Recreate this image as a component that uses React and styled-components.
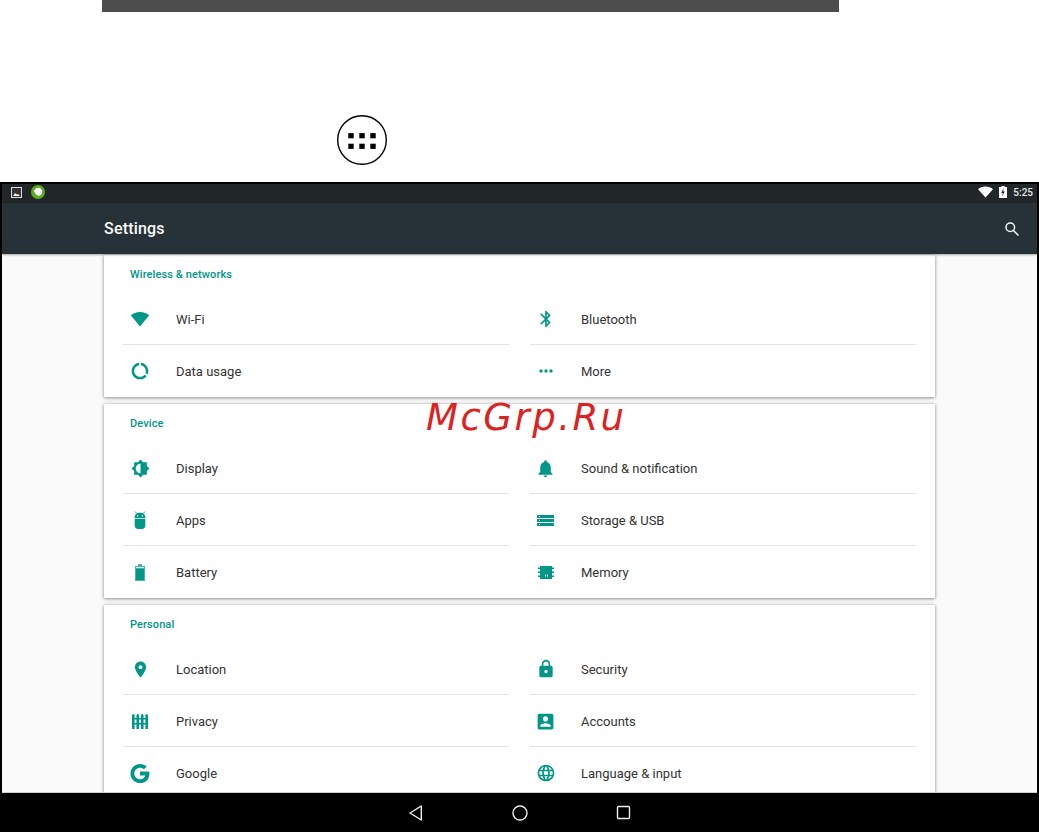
import React from 'react';
import styled, { createGlobalStyle } from 'styled-components';

const Global = createGlobalStyle`
  html, body { margin: 0; padding: 0; background: #fff; }
  body { font-family: Roboto, "Liberation Sans", sans-serif; width: 1039px; height: 832px; overflow: hidden; }
`;

const Page = styled.div`
  width: 1039px; height: 832px; display: flex; flex-direction: column; overflow: hidden; background: #fff;
`;
const Manual = styled.div`
  height: 182px; flex: none; padding-left: 102px; display: flex; flex-direction: column;
`;
const TopBar = styled.div`
  width: 737px; height: 12px; background: #4d4d4d; flex: none;
`;
const LauncherWrap = styled.div`
  margin: 102px 0 0 234px; width: 52px; height: 52px;
`;
const Screen = styled.div`
  flex: 1; display: flex; flex-direction: column; position: relative; min-height: 0;
  border: solid #000; border-width: 2px 2px 0; background: #fafafa;
`;
const StatusBar = styled.div`
  height: 19px; flex: none; box-sizing: border-box; background: #212729; display: flex; align-items: center;
  padding: 0 4px 3px 9px; justify-content: space-between;
`;
const StatusGroup = styled.div`
  display: flex; align-items: center; gap: ${p => p.$gap}px;
`;
const Clock = styled.span`
  font-size: 10px; font-weight: 500; color: #e8e8e8; width: 20px; text-align: right;
`;
const Toolbar = styled.div`
  height: 51px; flex: none; background: #263238;
  display: flex; align-items: center; justify-content: space-between; padding: 0 17px 0 102px;
  position: relative; z-index: 2; box-shadow: 0 1px 2px rgba(0,0,0,.35);
`;
const Title = styled.h1`
  margin: 0; font-size: 16px; font-weight: 500; color: #fafafa; letter-spacing: .2px;
`;
const Content = styled.div`
  flex: 1; min-height: 0; overflow: hidden; padding: 1px 102px 0;
  display: flex; flex-direction: column; gap: 7px;
`;
const Card = styled.section`
  flex: none; background: #fff; padding: 0 19px;
  box-shadow: 0 1px 3px rgba(0,0,0,.35), 0 0 4px rgba(0,0,0,.18);
`;
const Heading = styled.h2`
  margin: 0; height: 38px; padding-left: 7px; box-sizing: border-box; display: flex; align-items: center;
  font-size: 11px; font-weight: 500; color: #009688; letter-spacing: .1px;
`;
const Grid = styled.div`
  display: grid; grid-template-columns: 386px 386px; column-gap: 21px;
`;
const Row = styled.div`
  height: 52px; box-sizing: border-box; display: flex; align-items: center;
  padding-top: ${p => p.$last ? 0 : 1}px;
  border-bottom: ${p => p.$last ? 'none' : '1px solid #e3e3e3'};
`;
const IconCell = styled.span`
  width: ${p => p.$right ? 51 : 53}px; flex: none; display: flex; justify-content: center;
  padding-right: ${p => p.$right ? 20 : 19}px; box-sizing: border-box; color: #009688;
`;
const Label = styled.span`
  font-size: 13px; color: #333; white-space: nowrap;
`;
const NavBar = styled.div`
  height: 40px; flex: none; background: #000; border-top: 1px solid #d0d0d0; box-sizing: border-box;
  display: flex; align-items: center; padding-left: 405px; gap: 86px;
`;
const Watermark = styled.div`
  position: absolute; left: 424px; top: 215px; font-family: "DejaVu Sans", sans-serif; font-style: italic;
  font-size: 37px; color: #dd2222; letter-spacing: 2.500px; line-height: 1;
`;

const Svg = ({ size = 20, children, vb = '0 0 24 24' }) => (
  <svg width={size} height={size} viewBox={vb} fill="currentColor">{children}</svg>
);

const icons = {
  wifi: <Svg size={20}><path d="M12 21 1 7.5C3.5 5 7.5 3.5 12 3.5S20.500 5 23 7.500z" /></Svg>,
  bt: <Svg size={20}><path d="M17.710 7.710 12 2h-1v7.590L6.410 5 5 6.410 10.590 12 5 17.590 6.410 19 11 14.410V22h1l5.710-5.710L13.410 12l4.300-4.290zM13 5.830l1.880 1.880L13 9.590V5.830zm1.880 10.460L13 18.170v-3.760l1.880 1.880z" /></Svg>,
  data: <Svg size={20}><path d="M13 2.050v3.030c3.390.49 6 3.390 6 6.920 0 .9-.18 1.750-.48 2.540l2.600 1.530c.56-1.240.88-2.620.88-4.070 0-5.180-3.950-9.450-9-9.950zM12 19c-3.870 0-7-3.130-7-7 0-3.530 2.610-6.430 6-6.920V2.050c-5.060.5-9 4.760-9 9.950 0 5.520 4.470 10 9.990 10 3.310 0 6.240-1.610 8.060-4.090l-2.600-1.530C16.170 17.980 14.210 19 12 19z" /></Svg>,
  more: <Svg size={20}><circle cx="6" cy="12" r="2" /><circle cx="12" cy="12" r="2" /><circle cx="18" cy="12" r="2" /></Svg>,
  display: <Svg size={19}><g transform="matrix(-1 0 0 1 24 0)"><path d="M20 15.310 23.310 12 20 8.690V4h-4.690L12 .69 8.690 4H4v4.690L.69 12 4 15.310V20h4.690L12 23.310 15.310 20H20v-4.690zM12 18V6c3.310 0 6 2.690 6 6s-2.690 6-6 6z" /></g></Svg>,
  bell: <Svg size={21}><path d="M12 22c1.100 0 2-.9 2-2h-4c0 1.100.9 2 2 2zm6-6v-5c0-3.070-1.630-5.640-4.500-6.320V4c0-.83-.67-1.500-1.500-1.500s-1.500.67-1.500 1.500v.68C7.640 5.360 6 7.920 6 11v5l-2 2v1h16v-1l-2-2z" /></Svg>,
  apps: (
    <svg width="12" height="18" viewBox="0 0 12 18" fill="currentColor">
      <path d="M1 .5 3 2.800M11 .5 9 2.800" stroke="currentColor" strokeWidth=".8" />
      <path fillRule="evenodd" d="M.7 7.200V6C.7 3.500 3 1.700 6 1.700S11.300 3.500 11.300 6v1.200zM3 4.200v1.300h1.300V4.200zm4.700 0v1.300H9V4.200z" />
      <path d="M.7 8h10.600v6.300A3.700 3.700 0 0 1 7.600 18H4.400A3.700 3.700 0 0 1 .7 14.300z" />
    </svg>
  ),
  storage: (
    <svg width="17" height="11" viewBox="0 0 17 11" fill="currentColor">
      <path fillRule="evenodd" d="M0 0h17v3H0zM2 1v1h1V1zM0 4h17v3H0zM2 5v1h1V5zM0 8h17v3H0zM2 9v1h1V9z" />
    </svg>
  ),
  battery: (
    <svg width="10" height="17" viewBox="0 0 10 17">
      <path d="M3 0h4v2h3v15H0V2h3z" fill="#4db6ac" />
      <rect x="1" y="3" width="8" height="1.500" fill="#cfeae7" />
      <rect x="1" y="4.500" width="8" height="11.500" fill="#009688" />
    </svg>
  ),
  memory: (
    <svg width="16" height="13" viewBox="0 0 16 13" fill="currentColor">
      <path fillRule="evenodd" d="M2 0h12v13H2zM7 8.500v2h1v-2zm2 0v2h1v-2z" />
      <path d="M0 1.500h2V3H0zM0 5.500h2V7H0zM0 9.500h2V11H0zM14 1.500h2V3h-2zM14 5.500h2V7h-2zM14 9.500h2V11h-2z" />
    </svg>
  ),
  location: <Svg size={19}><path d="M12 2C8.130 2 5 5.130 5 9c0 5.250 7 13 7 13s7-7.750 7-13c0-3.870-3.130-7-7-7zm0 9.500c-1.380 0-2.500-1.120-2.500-2.500s1.120-2.500 2.500-2.500 2.500 1.120 2.500 2.500-1.120 2.500-2.500 2.500z" /></Svg>,
  lock: <Svg size={20}><path d="M18 8h-1V6c0-2.760-2.240-5-5-5S7 3.240 7 6v2H6c-1.100 0-2 .9-2 2v10c0 1.100.9 2 2 2h12c1.100 0 2-.9 2-2V10c0-1.100-.9-2-2-2zm-6 9c-1.100 0-2-.9-2-2s.9-2 2-2 2 .9 2 2-.9 2-2 2zm3.100-9H8.900V6c0-1.710 1.390-3.100 3.100-3.100 1.710 0 3.100 1.390 3.100 3.100v2z" /></Svg>,
  privacy: (
    <svg width="16" height="16" viewBox="0 0 16 16" fill="currentColor">
      <path d="M0 2 1.300.7 2.600 2v14H0zM4.450 2 5.750.7 7.050 2v14h-2.600zM8.950 2l1.300-1.300L11.550 2v14h-2.600zM13.400 2l1.300-1.300L16 2v14h-2.600z" />
      <path d="M0 5h16v1.500H0zM0 10h16v1.500H0z" />
    </svg>
  ),
  account: <Svg size={21}><path d="M3 5v14c0 1.100.89 2 2 2h14c1.100 0 2-.9 2-2V5c0-1.100-.9-2-2-2H5c-1.110 0-2 .9-2 2zm12 4c0 1.660-1.340 3-3 3s-3-1.340-3-3 1.340-3 3-3 3 1.340 3 3zm-9 8c0-2 4-3.100 6-3.100s6 1.100 6 3.100v1H6v-1z" /></Svg>,
  google: <Svg size={23}><path d="M11.500 10v4h5.500c-.7 2.400-2.800 4-5.500 4-3.400 0-6-2.700-6-6s2.600-6 6-6c1.600 0 3 .6 4.100 1.600l2.900-2.900C16.500 3 14.200 2 11.500 2 6 2 1.500 6.500 1.500 12s4.500 10 10 10c5.800 0 9.800-4 9.800-9.800 0-.8-.1-1.500-.2-2.200h-9.600z" /></Svg>,
  globe: <Svg size={20}><path d="M11.990 2C6.470 2 2 6.480 2 12s4.470 10 9.990 10C17.520 22 22 17.520 22 12S17.520 2 11.990 2zm6.930 6h-2.950c-.32-1.250-.78-2.450-1.380-3.560 1.840.63 3.370 1.910 4.330 3.560zM12 4.040c.83 1.200 1.480 2.530 1.910 3.960h-3.820c.43-1.430 1.080-2.760 1.910-3.960zM4.260 14C4.100 13.360 4 12.690 4 12s.1-1.360.26-2h3.380c-.08.66-.14 1.320-.14 2 0 .68.06 1.340.14 2H4.260zm.82 2h2.950c.32 1.250.78 2.450 1.380 3.560-1.840-.63-3.370-1.900-4.330-3.560zm2.950-8H5.080c.96-1.660 2.490-2.930 4.330-3.560C8.810 5.550 8.350 6.750 8.030 8zM12 19.960c-.83-1.200-1.480-2.530-1.910-3.960h3.820c-.43 1.430-1.080 2.760-1.910 3.960zM14.340 14H9.660c-.09-.66-.16-1.320-.16-2 0-.68.07-1.350.16-2h4.680c.09.65.16 1.320.16 2 0 .68-.07 1.340-.16 2zm.25 5.560c.6-1.110 1.060-2.310 1.380-3.560h2.950c-.96 1.650-2.490 2.930-4.330 3.560zM16.360 14c.08-.66.14-1.320.14-2 0-.68-.06-1.340-.14-2h3.380c.16.64.26 1.310.26 2s-.1 1.360-.26 2h-3.380z" /></Svg>,
};

const sections = [
  { title: 'Wireless & networks', rows: [
    [['wifi', 'Wi-Fi'], ['bt', 'Bluetooth']],
    [['data', 'Data usage'], ['more', 'More']],
  ]},
  { title: 'Device', rows: [
    [['display', 'Display'], ['bell', 'Sound & notification']],
    [['apps', 'Apps'], ['storage', 'Storage & USB']],
    [['battery', 'Battery'], ['memory', 'Memory']],
  ]},
  { title: 'Personal', rows: [
    [['location', 'Location'], ['lock', 'Security']],
    [['privacy', 'Privacy'], ['account', 'Accounts']],
    [['google', 'Google'], ['globe', 'Language & input']],
  ]},
];

export default function App() {
  return (
    <Page>
      <Global />
      <Manual>
        <TopBar />
        <LauncherWrap>
          <svg width="52" height="52" viewBox="0 0 52 52">
            <circle cx="26" cy="26" r="24.300" fill="#fff" stroke="#000" strokeWidth="1.400" />
            {[15, 26, 37].map(x => [21.700, 32.300].map(y => (
              <rect key={x + '-' + y} x={x - 2.700} y={y - 2.600} width="5.400" height="5.200" fill="#000" />
            )))}
          </svg>
        </LauncherWrap>
      </Manual>
      <Screen>
        <StatusBar>
          <StatusGroup $gap={9}>
            <svg width="11" height="11" viewBox="0 0 11 11">
              <rect x=".5" y=".5" width="10" height="10" fill="#333" stroke="#ddd" />
              <path d="M2 9l2-3 2 1.500L7 7l2 2z" fill="#eee" />
            </svg>
            <svg width="14" height="14" viewBox="0 0 14 14">
              <circle cx="7" cy="7" r="7" fill="#5aab1e" />
              <path d="M2.800 6 5.300 3 9 2.800 11.300 5.500 10.500 9.500 7.500 11 5 9.500z" fill="#fff" />
            </svg>
          </StatusGroup>
          <StatusGroup $gap={6}>
            <svg width="15" height="12" viewBox="0 0 15 12"><path d="M7.500 11.500 0 3.300C2.100 1.400 4.600.5 7.500.5s5.400.9 7.500 2.800z" fill="#fff" /></svg>
            <svg width="8" height="12" viewBox="0 0 8 12">
              <path d="M2.500 0h3v1H8v11H0V1h2.500z" fill="#fff" />
              <path d="M4.600 2 2.200 7h1.600L3 10.500 5.800 5.500H4.200z" fill="#212729" />
            </svg>
            <Clock>5:25</Clock>
          </StatusGroup>
        </StatusBar>
        <Toolbar>
          <Title>Settings</Title>
          <svg width="16" height="16" viewBox="0 0 16 16" fill="none" stroke="#f5f5f5" strokeWidth="1.500">
            <circle cx="6.300" cy="6.300" r="4.300" />
            <path d="M9.500 9.500 14.500 14.500" />
          </svg>
        </Toolbar>
        <Content>
          {sections.map(s => (
            <Card key={s.title}>
              <Heading>{s.title}</Heading>
              <Grid>
                {s.rows.flatMap((r, i) => r.map(([ic, label], col) => (
                  <Row key={label} $last={i === s.rows.length - 1}>
                    <IconCell $right={col === 1}>{icons[ic]}</IconCell>
                    <Label>{label}</Label>
                  </Row>
                )))}
              </Grid>
            </Card>
          ))}
        </Content>
        <NavBar>
          <svg width="18" height="18" viewBox="0 0 18 18" fill="none" stroke="#eee" strokeWidth="1.400"><path d="M14.300 2v14L3 9z" strokeLinejoin="round" /></svg>
          <svg width="18" height="18" viewBox="0 0 18 18" fill="none" stroke="#eee" strokeWidth="1.400"><circle cx="9" cy="9" r="7" /></svg>
          <svg width="18" height="18" viewBox="0 0 18 18" fill="none" stroke="#eee" strokeWidth="1.400"><rect x="2.500" y="2.500" width="12" height="12" rx="1" /></svg>
        </NavBar>
        <Watermark>McGrp.Ru</Watermark>
      </Screen>
    </Page>
  );
}
